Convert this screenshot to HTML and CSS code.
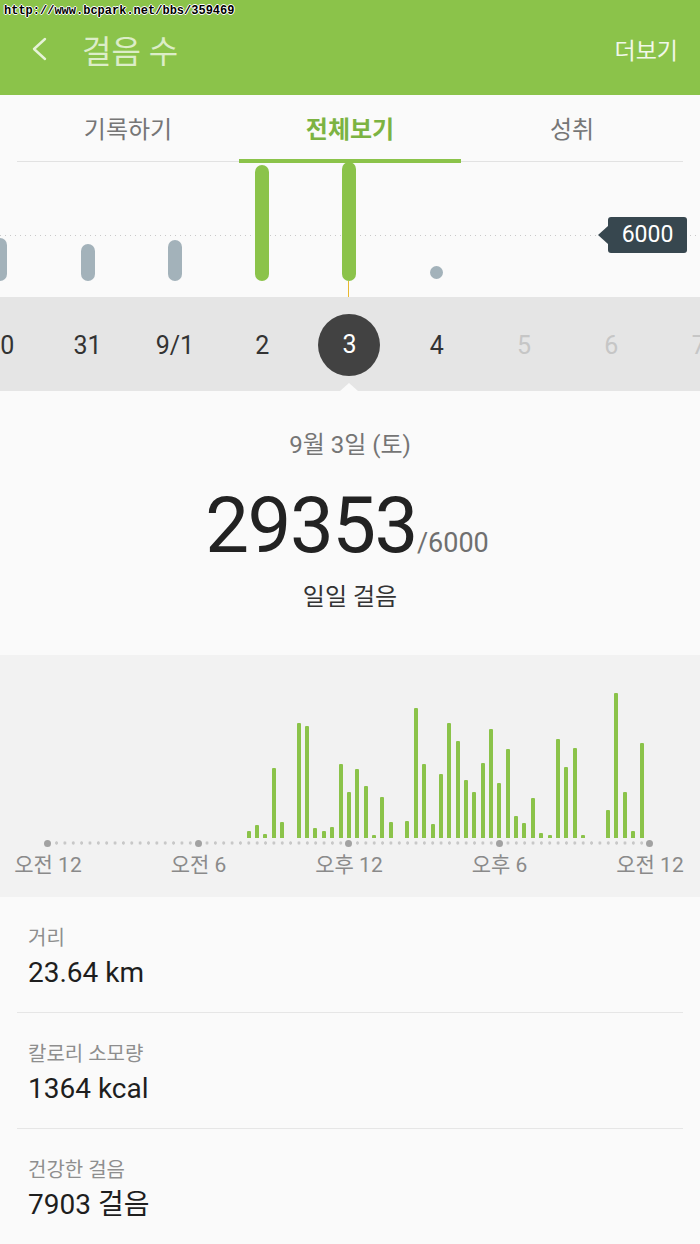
FILE: index.html
```html
<!DOCTYPE html>
<html lang="ko">
<head>
    <meta charset="UTF-8">
    <meta name="viewport" content="width=device-width, initial-scale=1.0">
    <title>걸음 수</title>
    <link rel="stylesheet" href="styles.css">
</head>
<body>
    <div class="screen">
        <div class="watermark">http://www.bcpark.net/bbs/359469</div>

        <header class="appbar">
            <svg class="back" width="18" height="24" viewBox="0 0 18 24">
                <path d="M15 2 L4 12 L15 22" />
            </svg>
            <h1 class="title">걸음 수</h1>
            <span class="more">더보기</span>
        </header>

        <nav class="tabs">
            <div class="tab">기록하기</div>
            <div class="tab active">전체보기</div>
            <div class="tab">성취</div>
        </nav>

        <!-- daily bars + date picker -->
        <section class="daily">
            <div class="goal-line"></div>
            <div class="goal-tip">6000</div>
            <div class="cols bars">
                <div class="col"><div class="bar" style="height:43px"></div><div class="stem"></div></div>
                <div class="col"><div class="bar" style="height:37px"></div><div class="stem"></div></div>
                <div class="col"><div class="bar" style="height:41px"></div><div class="stem"></div></div>
                <div class="col"><div class="bar over" style="height:116px"></div><div class="stem"></div></div>
                <div class="col"><div class="bar over" style="height:119px"></div><div class="stem picked"></div></div>
                <div class="col"><div class="dot"></div><div class="stem"></div></div>
                <div class="col"><div class="stem"></div></div>
                <div class="col"><div class="stem"></div></div>
                <div class="col"><div class="stem"></div></div>
            </div>
            <div class="cols dates">
                <div class="date">30</div>
                <div class="date">31</div>
                <div class="date">9/1</div>
                <div class="date">2</div>
                <div class="date selected"><span class="circle">3</span></div>
                <div class="date">4</div>
                <div class="date future">5</div>
                <div class="date future">6</div>
                <div class="date future">7</div>
            </div>
        </section>

        <section class="summary">
            <div class="day">9월 3일 (토)</div>
            <div class="count">29353<span class="goal">/6000</span></div>
            <div class="caption">일일 걸음</div>
        </section>

        <!-- hourly distribution, one bar per 20 minutes -->
        <section class="hourly">
            <div class="hour-bars">
                <i style="grid-column:25;height:7px"></i>
                <i style="grid-column:26;height:13px"></i>
                <i style="grid-column:27;height:4px"></i>
                <i style="grid-column:28;height:70px"></i>
                <i style="grid-column:29;height:16px"></i>
                <i style="grid-column:31;height:115px"></i>
                <i style="grid-column:32;height:112px"></i>
                <i style="grid-column:33;height:10px"></i>
                <i style="grid-column:34;height:7px"></i>
                <i style="grid-column:35;height:11px"></i>
                <i style="grid-column:36;height:74px"></i>
                <i style="grid-column:37;height:46px"></i>
                <i style="grid-column:38;height:69px"></i>
                <i style="grid-column:39;height:52px"></i>
                <i style="grid-column:40;height:3px"></i>
                <i style="grid-column:41;height:41px"></i>
                <i style="grid-column:42;height:16px"></i>
                <i style="grid-column:44;height:17px"></i>
                <i style="grid-column:45;height:130px"></i>
                <i style="grid-column:46;height:74px"></i>
                <i style="grid-column:47;height:14px"></i>
                <i style="grid-column:48;height:64px"></i>
                <i style="grid-column:49;height:115px"></i>
                <i style="grid-column:50;height:97px"></i>
                <i style="grid-column:51;height:58px"></i>
                <i style="grid-column:52;height:46px"></i>
                <i style="grid-column:53;height:75px"></i>
                <i style="grid-column:54;height:109px"></i>
                <i style="grid-column:55;height:55px"></i>
                <i style="grid-column:56;height:89px"></i>
                <i style="grid-column:57;height:22px"></i>
                <i style="grid-column:58;height:15px"></i>
                <i style="grid-column:59;height:40px"></i>
                <i style="grid-column:60;height:5px"></i>
                <i style="grid-column:61;height:3px"></i>
                <i style="grid-column:62;height:99px"></i>
                <i style="grid-column:63;height:71px"></i>
                <i style="grid-column:64;height:90px"></i>
                <i style="grid-column:65;height:3px"></i>
                <i style="grid-column:68;height:28px"></i>
                <i style="grid-column:69;height:145px"></i>
                <i style="grid-column:70;height:46px"></i>
                <i style="grid-column:71;height:7px"></i>
                <i style="grid-column:72;height:95px"></i>
            </div>
            <div class="hour-axis">
                <b style="grid-column:1"></b>
                <b style="grid-column:19"></b>
                <b style="grid-column:37"></b>
                <b style="grid-column:55"></b>
                <b style="grid-column:73"></b>
            </div>
            <div class="hour-labels">
                <span>오전 12</span>
                <span>오전 6</span>
                <span>오후 12</span>
                <span>오후 6</span>
                <span>오전 12</span>
            </div>
        </section>

        <section class="stats">
            <div class="stat">
                <div class="stat-label">거리</div>
                <div class="stat-value">23.64 km</div>
            </div>
            <div class="stat">
                <div class="stat-label">칼로리 소모량</div>
                <div class="stat-value">1364 kcal</div>
            </div>
            <div class="stat">
                <div class="stat-label">건강한 걸음</div>
                <div class="stat-value">7903 걸음</div>
            </div>
        </section>
    </div>
</body>
</html>
```

FILE: styles.css
```css
body {
    margin: 0;
    font-family: Roboto, "Noto Sans CJK KR", sans-serif;
    background-color: #fafafa;
    color: #212121;
}

.screen {
    position: relative;
    width: 700px;
    height: 1244px;
    overflow: hidden;
    background: #fafafa;
}

.watermark {
    position: absolute;
    top: 4px;
    left: 4px;
    font-family: "Liberation Mono", monospace;
    font-size: 12px;
    font-weight: bold;
    line-height: 14px;
    color: #000;
    text-shadow: 1px 0 #fff, -1px 0 #fff, 0 1px #fff, 0 -1px #fff;
    z-index: 5;
}

/* app bar */
.appbar {
    height: 95px;
    background: #8bc34a;
    display: flex;
    align-items: center;
    padding: 3px 22px 0 30px;
    box-sizing: border-box;
}

.back {
    fill: none;
    stroke: #e6f3d8;
    stroke-width: 2.4;
    stroke-linecap: round;
    stroke-linejoin: round;
}

.title {
    margin: 0 0 0 34px;
    font-size: 32px;
    font-weight: 400;
    color: #dcedc8;
    flex: 1;
}

.more {
    font-size: 23px;
    color: #f1f8e9;
}

/* tabs */
.tabs {
    display: flex;
    align-items: flex-start;
    margin: 0 17px;
    border-bottom: 1px solid #e2e2e2;
}

.tab {
    flex: 1;
    height: 66px;
    box-sizing: border-box;
    padding-top: 19px;
    text-align: center;
    font-size: 24px;
    line-height: 32px;
    color: #767676;
}

.tab.active {
    color: #7cb342;
    font-weight: bold;
    height: 68px;
    border-bottom: 4px solid #8bc34a;
    margin-bottom: -2px;
}

/* daily chart */
.daily {
    position: relative;
}

.goal-line {
    position: absolute;
    top: 73px;
    left: 0;
    right: 0;
    height: 1px;
    background: repeating-linear-gradient(to right, #c9c9c9 0 1px, transparent 1px 5px);
}

.goal-tip {
    position: absolute;
    top: 55px;
    right: 13px;
    width: 79px;
    height: 36px;
    background: #37474f;
    border-radius: 3px;
    color: #fff;
    font-size: 23px;
    line-height: 36px;
    text-align: center;
    z-index: 2;
}

.goal-tip::before {
    content: '';
    position: absolute;
    left: -10px;
    top: 9px;
    border-top: 9px solid transparent;
    border-bottom: 9px solid transparent;
    border-right: 10px solid #37474f;
}

.cols {
    display: flex;
    margin-left: -43.35px;
    width: 785.7px;
}

.bars {
    position: relative;
    z-index: 1;
    height: 135px;
}

.col {
    width: 87.3px;
    display: flex;
    flex-direction: column;
    justify-content: flex-end;
    align-items: center;
}

.bar {
    width: 14px;
    border-radius: 7px;
    background: #a3b2ba;
}

.bar.over {
    background: #8bc34a;
}

.dot {
    width: 13px;
    height: 13px;
    border-radius: 50%;
    background: #a3b2ba;
    margin-bottom: 2px;
}

.stem {
    width: 2px;
    height: 16px;
}

.stem.picked {
    background: linear-gradient(to right, #e8b830 0 1px, transparent 1px);
}

.dates {
    height: 94px;
    background: #e5e5e5;
}

.date {
    position: relative;
    width: 87.3px;
    display: flex;
    align-items: center;
    justify-content: center;
    font-size: 25px;
    color: #333;
    padding-top: 3px;
}

.date.future {
    color: #c6c6c6;
}

.circle {
    width: 62px;
    height: 62px;
    border-radius: 50%;
    background: #424242;
    color: #fff;
    display: flex;
    align-items: center;
    justify-content: center;
    margin-top: -2px;
}

.date.selected::after {
    content: '';
    position: absolute;
    bottom: 0;
    left: 50%;
    margin-left: -9px;
    border-left: 9px solid transparent;
    border-right: 9px solid transparent;
    border-bottom: 8px solid #fafafa;
}

/* today summary */
.summary {
    text-align: center;
    padding: 38px 0 42px;
}

.day {
    font-size: 24px;
    line-height: 32px;
    color: #757575;
}

.count {
    margin-top: 26px;
    font-size: 78px;
    line-height: 78px;
    height: 78px;
    letter-spacing: -1.5px;
    color: #222;
    margin-left: -6px;
}

.goal {
    font-size: 27px;
    line-height: 1;
    letter-spacing: 0;
    color: #6f6f6f;
}

.caption {
    margin-top: 16px;
    font-size: 24px;
    line-height: 32px;
    color: #333;
}

/* hourly chart */
.hourly {
    background: #f2f2f2;
    padding: 33px 0 20px;
}

.hour-bars {
    display: grid;
    grid-template-columns: repeat(72, 8.361px);
    grid-template-rows: 150px;
    align-items: end;
    justify-items: center;
    margin-left: 43.82px;
}

.hour-bars i {
    grid-row: 1;
    width: 4px;
    background: #8bc34a;
    border-radius: 1px 1px 0 0;
}

.hour-axis {
    display: grid;
    grid-template-columns: repeat(73, 8.361px);
    grid-template-rows: 10px;
    align-items: center;
    justify-items: center;
    margin-left: 43.82px;
    width: 610.35px;
    background: radial-gradient(circle at center, #c8c8c8 1.4px, transparent 1.9px) 0 0 / 8.361px 10px repeat-x;
}

.hour-axis b {
    grid-row: 1;
    width: 7px;
    height: 7px;
    border-radius: 50%;
    background: #a2a2a2;
}

.hour-labels {
    display: grid;
    grid-template-columns: repeat(5, 150.5px);
    margin: 5px 0 0 -27.25px;
    font-size: 21px;
    line-height: 24px;
    color: #8a8a8a;
    text-align: center;
}

/* stats list */
.stats {
    padding: 0 17px;
}

.stat {
    padding: 28px 11px 22px;
    border-bottom: 1px solid #e6e6e6;
}

.stat-label {
    font-size: 20px;
    line-height: 26px;
    color: #8e8e8e;
}

.stat-value {
    margin-top: 5px;
    font-size: 28px;
    line-height: 34px;
    color: #1e1e1e;
}
```
